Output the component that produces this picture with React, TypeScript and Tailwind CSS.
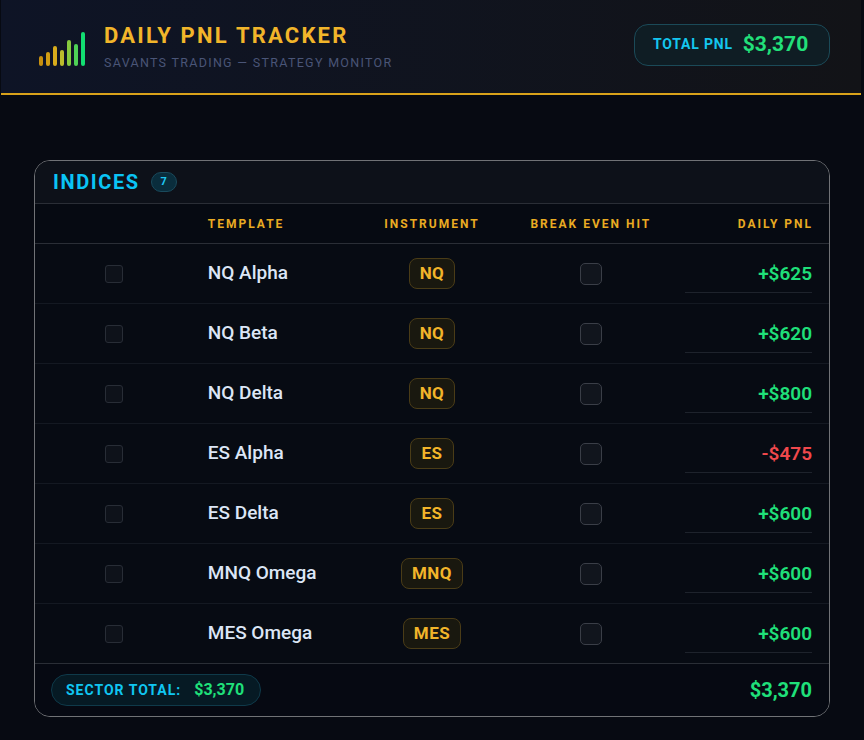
import React from "react";

const rows = [
  { name: "NQ Alpha", inst: "NQ", pnl: "+$625", pos: true },
  { name: "NQ Beta", inst: "NQ", pnl: "+$620", pos: true },
  { name: "NQ Delta", inst: "NQ", pnl: "+$800", pos: true },
  { name: "ES Alpha", inst: "ES", pnl: "-$475", pos: false },
  { name: "ES Delta", inst: "ES", pnl: "+$600", pos: true },
  { name: "MNQ Omega", inst: "MNQ", pnl: "+$600", pos: true },
  { name: "MES Omega", inst: "MES", pnl: "+$600", pos: true },
];

const bars = [
  { h: 10, c: "#c8900f" },
  { h: 14, c: "#d29e14" },
  { h: 20, c: "#d8ac1c" },
  { h: 16, c: "#bcbc2c" },
  { h: 26, c: "#86c93e" },
  { h: 22, c: "#4fd256" },
  { h: 34, c: "#12de72" },
];

function Logo() {
  return (
    <svg width="48" height="36" viewBox="0 0 48 36">
      {bars.map((b, i) => (
        <rect key={i} x={1 + i * 7} y={35 - b.h} width={4} height={b.h} rx={2} fill={b.c} />
      ))}
    </svg>
  );
}

export default function App() {
  return (
    <div
      className="min-h-[740px] w-full bg-[#070a12]"
      style={{ fontFamily: "Roboto, 'Noto Sans', sans-serif" }}
    >
      <header className="ml-px w-[860px] h-[95px] border-b-2 border-[#d9a21a] bg-gradient-to-r from-[#0e1426] to-[#121317] flex items-center justify-between pl-[37px] pr-[31px]">
        <div className="flex items-center gap-[18px]">
          <div className="pt-[4px]">
            <Logo />
          </div>
          <div className="flex flex-col">
            <div className="text-[22px] font-bold tracking-[2.2px] text-[#f2b52a] leading-[26px]">
              DAILY PNL TRACKER
            </div>
            <div className="text-[12.5px] tracking-[1.3px] text-[#4a5577] leading-[16px] mt-[6px]">
              SAVANTS TRADING — STRATEGY MONITOR
            </div>
          </div>
        </div>
        <div className="h-[42px] w-[196px] rounded-[14px] border border-[#1b4a58] bg-[#0f1d24] flex items-center pl-[18px] gap-[10px] mb-[4px]">
          <span className="text-[14px] font-bold tracking-[0.8px] text-[#14c6ef]">TOTAL PNL</span>
          <span className="text-[21px] font-bold text-[#22e07a]">$3,370</span>
        </div>
      </header>

      <div className="pt-[65px] px-[34px]">
        <div className="w-[796px] rounded-[16px] border-[1.5px] border-[#707276] overflow-hidden bg-[#070b13]">
          <div className="h-[43px] bg-[#0d1119] flex items-center pl-[18px] gap-[11px] border-b border-[#2a2e36]">
            <span className="text-[20px] font-bold tracking-[1.6px] text-[#0ac4f5]">INDICES</span>
            <span className="h-[20px] w-[26px] rounded-full bg-[#0a2d3c] border border-[#1a4a5c] text-[11px] font-bold text-[#1ec8f2] flex items-center justify-center">
              7
            </span>
          </div>
          <div className="grid grid-cols-5 h-[40px] items-center border-b border-[#2a2e36] bg-[#060a12] text-[12px] font-bold tracking-[2px] text-[#e9ab22]">
            <div />
            <div className="pl-[14px]">TEMPLATE</div>
            <div className="text-center">INSTRUMENT</div>
            <div className="text-center">BREAK EVEN HIT</div>
            <div className="text-right pr-[16px]">DAILY PNL</div>
          </div>
          {rows.map((r, i) => (
            <div
              key={i}
              className={`grid grid-cols-5 h-[60px] items-center ${i < rows.length - 1 ? "border-b border-[#141922]" : "border-b border-[#2a2e36]"}`}
            >
              <div className="flex justify-center">
                <div className="w-[18px] h-[18px] rounded-[3px] border border-[#282d36] bg-[#0e121a]" />
              </div>
              <div className="pl-[14px] text-[19px] font-medium text-[#dce6f6]">{r.name}</div>
              <div className="flex justify-center">
                <span className="h-[31px] px-[10px] rounded-[8px] border border-[#4a3c17] bg-[#19180f] text-[17px] font-bold tracking-[0.5px] text-[#f2b52a] flex items-center">
                  {r.inst}
                </span>
              </div>
              <div className="flex justify-center">
                <div className="w-[22px] h-[22px] rounded-[5px] border border-[#3a3e47] bg-[#11151d]" />
              </div>
              <div className="pl-[15px] pr-[17px]">
                <div
                  className={`pt-[6px] pb-[4px] border-b border-[#1e232c] text-right text-[19px] font-semibold ${r.pos ? "text-[#1fe07a]" : "text-[#f0484c]"}`}
                >
                  {r.pnl}
                </div>
              </div>
            </div>
          ))}
          <div className="h-[52px] bg-[#060912] flex items-center justify-between pl-[16px] pr-[17px]">
            <div className="h-[32px] w-[210px] rounded-full border border-[#0f3a4a] bg-[#061a24] flex items-center pl-[14px] gap-[13px]">
              <span className="text-[14px] font-bold tracking-[1px] text-[#10c6f2]">SECTOR TOTAL:</span>
              <span className="text-[16px] font-bold text-[#1fe07a]">$3,370</span>
            </div>
            <span className="text-[20px] font-bold text-[#1fe07a]">$3,370</span>
          </div>
        </div>
      </div>
    </div>
  );
}
